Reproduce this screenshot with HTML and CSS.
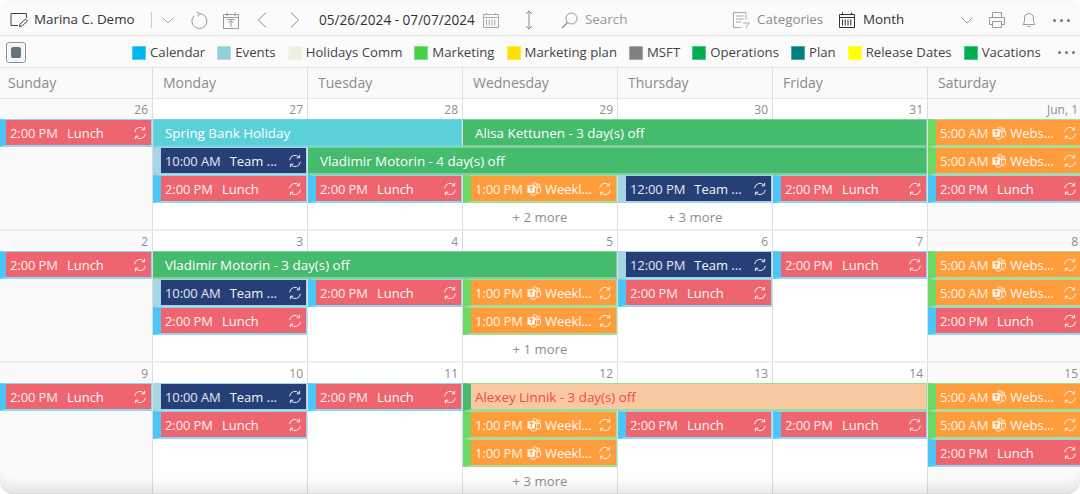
FILE: index.html
```html
<!DOCTYPE html>
<html lang="en">
<head>
<meta charset="utf-8">
<title>Calendar</title>
<link rel="stylesheet" href="styles.css">
</head>
<body>
<svg class="sprite" width="0" height="0" aria-hidden="true">
  <symbol id="sync" viewBox="0 0 14 14"><path d="M1.6 6.2A5.4 5.4 0 0 1 11.2 3.4M12.4 7.8A5.4 5.4 0 0 1 2.8 10.6" fill="none" stroke="currentColor"/><path d="M11.600 .8V3.800H8.600M2.400 13.200V10.200H5.400" fill="none" stroke="currentColor"/></symbol>
  <symbol id="teams" viewBox="0 0 15 15"><circle cx="8.500" cy="2.600" r="2" fill="none" stroke="currentColor"/><circle cx="12.500" cy="3.600" r="1.400" fill="none" stroke="currentColor"/><path d="M7.500 6H14.500V9.500A2.600 2.600 0 0 1 10.500 11.600M10.500 6V10.500A3.500 3.500 0 0 1 4 12.500V11" fill="none" stroke="currentColor"/><rect x=".5" y="3.500" width="8" height="8" fill="currentColor"/><path d="M2.300 5.500H6.700M4.500 5.500V9.800" stroke="#ff9c3c" stroke-width="1.200"/></symbol>
  <symbol id="chev" viewBox="0 0 12 7"><path d="M.5 .5 6 6 11.500 .5" fill="none" stroke="currentColor"/></symbol>
</svg>
<div class="frame">
<header class="toolbar">
  <svg class="ico i-note" width="18" height="16" viewBox="0 0 18 16"><path d="M8 13.500H1V1.500H16.500V6" fill="none" stroke="#444"/><path d="M9.500 14.500 10 12 15.500 7 17.500 9 12 14Z" fill="none" stroke="#444"/></svg>
  <span class="user">Marina C. Demo</span>
  <span class="divider"></span>
  <svg class="ico i-down" width="12" height="7"><use href="#chev"/></svg>
  <svg class="ico i-refresh" width="17" height="18" viewBox="0 0 17 18"><path d="M2.800 5A7.500 7.500 0 1 0 8.500 2.500" fill="none" stroke="#999"/><path d="M5.500 .8 8.600 2.500 6.800 5.500" fill="none" stroke="#999"/></svg>
  <svg class="ico i-today" width="16" height="17" viewBox="0 0 16 17"><path d="M.5 2.500H15.500V16.500H.5ZM.5 5.500H15.500M4 .5V4M12 .5V4" fill="none" stroke="#999"/><path d="M8 15V8.500M5.500 11 8 8.500 10.500 11M4 7.500H12" fill="none" stroke="#999"/></svg>
  <svg class="ico i-prev" width="10" height="16" viewBox="0 0 10 16"><path d="M9 .5 1.500 8 9 15.500" fill="none" stroke="#888"/></svg>
  <svg class="ico i-next" width="10" height="16" viewBox="0 0 10 16"><path d="M1 .5 8.500 8 1 15.500" fill="none" stroke="#888"/></svg>
  <span class="range">05/26/2024 - 07/07/2024</span>
  <svg class="ico i-cal" width="16" height="16" viewBox="0 0 16 16"><path d="M.5 2.500H15.500V15.500H.5ZM.5 5.500H15.500M3.500 1V3M12.500 1V3M3.500 7.500V13.500M6.200 7.500V13.500M9 7.500V13.500M11.800 7.500V13.500" fill="none" stroke="#aaa"/></svg>
  <svg class="ico i-size" width="8" height="20" viewBox="0 0 8 20"><path d="M4 1V19M1 4 4 1 7 4M1 16 4 19 7 16" fill="none" stroke="#888"/></svg>
  <svg class="ico i-search" width="17" height="17" viewBox="0 0 17 17"><circle cx="10.500" cy="6.500" r="5.500" fill="none" stroke="#8a9a9a"/><path d="M6.500 10.500 1 16" fill="none" stroke="#7c9090" stroke-width="1.300"/></svg>
  <span class="search">Search</span>
  <svg class="ico i-cats" width="17" height="17" viewBox="0 0 17 17"><path d="M8 15.500H.5V.5H13V8" fill="none" stroke="#aaa"/><path d="M3 4H10.500M3 7H10.500M3 10H8M10 11H16.500L13.300 14.500V16.500" fill="none" stroke="#aaa"/></svg>
  <span class="cats">Categories</span>
  <svg class="ico i-month" width="16" height="16" viewBox="0 0 16 16"><path d="M.5 2.500H15.500V15.500H.5ZM.5 5.500H15.500M3.500 .5V3M12.500 .5V3M3.500 7.500V13.500M6.200 7.500V13.500M9 7.500V13.500M11.800 7.500V13.500" fill="none" stroke="#333"/></svg>
  <span class="month">Month</span>
  <svg class="ico i-mdown" width="12" height="7"><use href="#chev"/></svg>
  <svg class="ico i-print" width="16" height="16" viewBox="0 0 16 16"><path d="M3.500 5V.5H12.500V5M3.500 12.500H.5V5.500H15.500V12.500H12.500M3.500 9.500H12.500V15.500H3.500Z" fill="none" stroke="#999"/></svg>
  <svg class="ico i-bell" width="14" height="16" viewBox="0 0 14 16"><path d="M1 12.500C2.500 11 2.500 9 2.500 6A4.500 4.500 0 0 1 11.500 6C11.500 9 11.500 11 13 12.500ZM5.500 14.500H8.500" fill="none" stroke="#999"/></svg>
  <span class="dots t-dots"><i></i><i></i><i></i></span>
</header>
<nav class="legend">
  <span class="check"><i></i></span>
  <span class="item first"><i class="sw" style="background:#00b7f1"></i>Calendar</span>
  <span class="item"><i class="sw" style="background:#92cddc"></i>Events</span>
  <span class="item"><i class="sw" style="background:#ebf1de"></i>Holidays Comm</span>
  <span class="item"><i class="sw" style="background:#47d147"></i>Marketing</span>
  <span class="item"><i class="sw" style="background:#ffe000"></i>Marketing plan</span>
  <span class="item"><i class="sw" style="background:#808080"></i>MSFT</span>
  <span class="item"><i class="sw" style="background:#00b050"></i>Operations</span>
  <span class="item"><i class="sw" style="background:#008080"></i>Plan</span>
  <span class="item"><i class="sw" style="background:#ffff00"></i>Release Dates</span>
  <span class="item"><i class="sw" style="background:#00b050"></i>Vacations</span>
  <span class="dots l-dots"><i></i><i></i><i></i></span>
</nav>
<div class="days">
  <div>Sunday</div><div>Monday</div><div>Tuesday</div><div>Wednesday</div><div>Thursday</div><div>Friday</div><div>Saturday</div>
</div>

<section class="week">
  <div class="day c1 wkend">26</div><div class="day c2">27</div><div class="day c3">28</div><div class="day c4">29</div><div class="day c5">30</div><div class="day c6">31</div><div class="day c7 wkend">Jun, 1</div>

  <div class="ev lunch c1 r1"><b>2:00 PM</b><span>Lunch</span><svg><use href="#sync"/></svg></div>
  <div class="ev allday holiday c2 s2 r1">Spring Bank Holiday</div>
  <div class="ev allday vac c4 s3 r1">Alisa Kettunen - 3 day(s) off</div>
  <div class="ev web c7 r1"><b>5:00 AM</b><svg class="tm"><use href="#teams"/></svg><span class="tight">Webs...</span><svg><use href="#sync"/></svg></div>

  <div class="ev team c2 r2"><b>10:00 AM</b><span>Team ...</span><svg><use href="#sync"/></svg></div>
  <div class="ev allday vac c3 s4 r2">Vladimir Motorin - 4 day(s) off</div>
  <div class="ev web c7 r2"><b>5:00 AM</b><svg class="tm"><use href="#teams"/></svg><span class="tight">Webs...</span><svg><use href="#sync"/></svg></div>

  <div class="ev lunch c2 r3"><b>2:00 PM</b><span>Lunch</span><svg><use href="#sync"/></svg></div>
  <div class="ev lunch c3 r3"><b>2:00 PM</b><span>Lunch</span><svg><use href="#sync"/></svg></div>
  <div class="ev web c4 r3"><b>1:00 PM</b><svg class="tm"><use href="#teams"/></svg><span class="tight">Weekl...</span><svg><use href="#sync"/></svg></div>
  <div class="ev team c5 r3"><b>12:00 PM</b><span>Team ...</span><svg><use href="#sync"/></svg></div>
  <div class="ev lunch c6 r3"><b>2:00 PM</b><span>Lunch</span><svg><use href="#sync"/></svg></div>
  <div class="ev lunch c7 r3"><b>2:00 PM</b><span>Lunch</span><svg><use href="#sync"/></svg></div>

  <div class="more c4 r4">+ 2 more</div>
  <div class="more c5 r4">+ 3 more</div>
</section>

<section class="week">
  <div class="day c1 wkend">2</div><div class="day c2">3</div><div class="day c3">4</div><div class="day c4">5</div><div class="day c5">6</div><div class="day c6">7</div><div class="day c7 wkend">8</div>

  <div class="ev lunch c1 r1"><b>2:00 PM</b><span>Lunch</span><svg><use href="#sync"/></svg></div>
  <div class="ev allday vac c2 s3 r1">Vladimir Motorin - 3 day(s) off</div>
  <div class="ev team c5 r1"><b>12:00 PM</b><span>Team ...</span><svg><use href="#sync"/></svg></div>
  <div class="ev lunch c6 r1"><b>2:00 PM</b><span>Lunch</span><svg><use href="#sync"/></svg></div>
  <div class="ev web c7 r1"><b>5:00 AM</b><svg class="tm"><use href="#teams"/></svg><span class="tight">Webs...</span><svg><use href="#sync"/></svg></div>

  <div class="ev team c2 r2"><b>10:00 AM</b><span>Team ...</span><svg><use href="#sync"/></svg></div>
  <div class="ev lunch c3 r2"><b>2:00 PM</b><span>Lunch</span><svg><use href="#sync"/></svg></div>
  <div class="ev web c4 r2"><b>1:00 PM</b><svg class="tm"><use href="#teams"/></svg><span class="tight">Weekl...</span><svg><use href="#sync"/></svg></div>
  <div class="ev lunch c5 r2"><b>2:00 PM</b><span>Lunch</span><svg><use href="#sync"/></svg></div>
  <div class="ev web c7 r2"><b>5:00 AM</b><svg class="tm"><use href="#teams"/></svg><span class="tight">Webs...</span><svg><use href="#sync"/></svg></div>

  <div class="ev lunch c2 r3"><b>2:00 PM</b><span>Lunch</span><svg><use href="#sync"/></svg></div>
  <div class="ev web c4 r3"><b>1:00 PM</b><svg class="tm"><use href="#teams"/></svg><span class="tight">Weekl...</span><svg><use href="#sync"/></svg></div>
  <div class="ev lunch c7 r3"><b>2:00 PM</b><span>Lunch</span><svg><use href="#sync"/></svg></div>

  <div class="more c4 r4">+ 1 more</div>
</section>

<section class="week">
  <div class="day c1 wkend">9</div><div class="day c2">10</div><div class="day c3">11</div><div class="day c4">12</div><div class="day c5">13</div><div class="day c6">14</div><div class="day c7 wkend">15</div>

  <div class="ev lunch c1 r1"><b>2:00 PM</b><span>Lunch</span><svg><use href="#sync"/></svg></div>
  <div class="ev team c2 r1"><b>10:00 AM</b><span>Team ...</span><svg><use href="#sync"/></svg></div>
  <div class="ev lunch c3 r1"><b>2:00 PM</b><span>Lunch</span><svg><use href="#sync"/></svg></div>
  <div class="ev allday peach c4 s3 r1">Alexey Linnik - 3 day(s) off</div>
  <div class="ev web c7 r1"><b>5:00 AM</b><svg class="tm"><use href="#teams"/></svg><span class="tight">Webs...</span><svg><use href="#sync"/></svg></div>

  <div class="ev lunch c2 r2"><b>2:00 PM</b><span>Lunch</span><svg><use href="#sync"/></svg></div>
  <div class="ev web c4 r2"><b>1:00 PM</b><svg class="tm"><use href="#teams"/></svg><span class="tight">Weekl...</span><svg><use href="#sync"/></svg></div>
  <div class="ev lunch c5 r2"><b>2:00 PM</b><span>Lunch</span><svg><use href="#sync"/></svg></div>
  <div class="ev lunch c6 r2"><b>2:00 PM</b><span>Lunch</span><svg><use href="#sync"/></svg></div>
  <div class="ev web c7 r2"><b>5:00 AM</b><svg class="tm"><use href="#teams"/></svg><span class="tight">Webs...</span><svg><use href="#sync"/></svg></div>

  <div class="ev web c4 r3"><b>1:00 PM</b><svg class="tm"><use href="#teams"/></svg><span class="tight">Weekl...</span><svg><use href="#sync"/></svg></div>
  <div class="ev lunch c7 r3"><b>2:00 PM</b><span>Lunch</span><svg><use href="#sync"/></svg></div>

  <div class="more c4 r4">+ 3 more</div>
</section>
</div>
</body>
</html>
```
FILE: styles.css
```css
* { box-sizing: border-box; }
html, body { margin: 0; height: 100%; overflow: hidden; background: #fff; }
body { font: 13px/1.3 "Open Sans", "Noto Sans", sans-serif; color: #333; }
.sprite { position: absolute; }
.frame { position: relative; width: 1080px; height: 494px; overflow: hidden; background: #fff; }
.frame::after { content: ""; position: absolute; inset: 0; pointer-events: none; border-radius: 12px; box-shadow: 0 0 0 6px #fff, inset 0 -16px 14px -10px rgba(0,0,0,.11), inset 0 3px 3px -2px rgba(0,0,0,.03); }

/* toolbar */
.toolbar { height: 36px; padding: 5px 0 0 10px; display: flex; align-items: center; background: #fbfbfb; border-bottom: 1px solid #e3e3e3; white-space: nowrap; font-size: 13.4px; }
.ico { flex: none; color: #aaa; display: block; }
.user { margin-left: 6px; color: #333; width: 101px; }
.divider { width: 1px; height: 16px; background: #ccc; margin-left: 16px; }
.i-down { margin-left: 10px; }
.i-refresh { margin-left: 17px; }
.i-today { margin-left: 15px; }
.i-prev { margin-left: 18px; }
.i-next { margin-left: 23px; }
.range { margin-left: 19px; width: 156px; color: #333; font-size: 13.6px; }
.i-cal { margin-left: 8px; }
.i-size { margin-left: 26px; }
.i-search { margin-left: 28px; }
.search { margin-left: 7px; width: 41px; color: #999; }
.i-cats { margin-left: 107px; }
.cats { margin-left: 7px; width: 66px; color: #8c8c8c; }
.i-month { margin-left: 16px; }
.month { margin-left: 8px; width: 41px; color: #333; }
.i-mdown { margin-left: 57px; color: #999; }
.i-print { margin-left: 16px; }
.i-bell { margin-left: 17px; }
.dots { display: flex; gap: 4px; }
.dots i { width: 3px; height: 3px; border-radius: 50%; background: #777; }
.t-dots { margin-left: 17px; }

/* legend */
.legend { height: 32px; padding: 2px 0 0 6px; display: flex; align-items: center; background: #fbfbfb; border-bottom: 1px solid #e3e3e3; white-space: nowrap; color: #444; font-size: 13.2px; }
.check { width: 20px; height: 21px; border: 1px solid #85949a; border-radius: 3px; display: flex; align-items: center; justify-content: center; box-shadow: inset 0 0 0 1px #fff; background: #f4f4f4; }
.check i { width: 10px; height: 11px; border-radius: 2px; background: #5f7480; }
.item { display: flex; align-items: center; gap: 4px; margin-left: 12px; }
.item.first { margin-left: 106px; }
.sw { width: 14px; height: 14px; display: block; border: 1px solid rgba(255,255,255,.3); }
.l-dots { margin-left: 17px; }

/* day header */
.days { height: 31px; margin-left: -2px; width: 1085px; display: grid; grid-template-columns: repeat(7, 155px); background: #fafafa; border-bottom: 1px solid #e6e6e6; }
.days div { padding: 5px 0 0 10px; font-size: 14px; line-height: 20px; color: #8a8a8a; border-right: 1px solid #ddd; }

/* weeks */
.week { margin-left: -2px; width: 1085px; height: 132px; display: grid; grid-template-columns: repeat(7, 155px); grid-template-rows: 20px repeat(4, 28px); background: #fff; }
.day { grid-row: 1 / 6; text-align: right; padding: 2px 4px 0 0; font-size: 12px; line-height: 18px; color: #8e8e8e; border-right: 1px solid #ddd; border-bottom: 2px solid #eee; }
.wkend { background: #fafafa; }
.c1 { grid-column-start: 1; } .c2 { grid-column-start: 2; } .c3 { grid-column-start: 3; } .c4 { grid-column-start: 4; }
.c5 { grid-column-start: 5; } .c6 { grid-column-start: 6; } .c7 { grid-column-start: 7; }
.s2 { grid-column-end: span 2; } .s3 { grid-column-end: span 3; } .s4 { grid-column-end: span 4; }
.r1 { grid-row: 2; } .r2 { grid-row: 3; } .r3 { grid-row: 4; } .r4 { grid-row: 5; }

.ev { height: 28px; margin-right: 1px; padding: 1px 4px 0 4px; display: flex; align-items: center; color: #fff; white-space: nowrap; border: solid var(--edge); border-width: 1px 1px 2px 8px; background-clip: padding-box; position: relative; line-height: 20px; }
.ev b { font-weight: 400; opacity: .88; letter-spacing: -.1px; }
.ev span { margin-left: 9px; flex: 1; min-width: 0; opacity: .95; }
.ev svg { width: 14px; height: 14px; flex: none; color: #fff; opacity: .9; }
.ev span.tight { margin-left: 4px; }
.ev svg.tm { margin-left: 4px; }
.lunch { background-color: #ee6570; --edge: #4cc6f9; border-top-color: #8dd8f7; border-right-color: #8dd8f7; border-bottom-color: #8dd8f7; }
.team { background-color: #273f77; --edge: #a6d6e4; }
.web { background-color: #ff9c3c; --edge: #6cd964; border-top-color: #a5dd9a; border-right-color: #a5dd9a; border-bottom-color: #a5dd9a; }
.allday { padding-left: 11px; display: block; line-height: 24px; font-size: 13.4px; border-left-width: 1px; }
.holiday { background-color: #5bd0d9; --edge: #6fd6de; }
.vac { background-color: #45bb6d; --edge: #7fd09a; border-left-color: #45bb6d; }
.peach { background-color: #f9c8a0; color: #ee4a4a; --edge: #9edb96; border-left: 8px solid #45bb6d; padding-left: 4px; }
.more { text-align: center; color: #8e8e8e; padding-top: 4px; margin-right: 1px; font-size: 13.2px; line-height: 20px; }
```
